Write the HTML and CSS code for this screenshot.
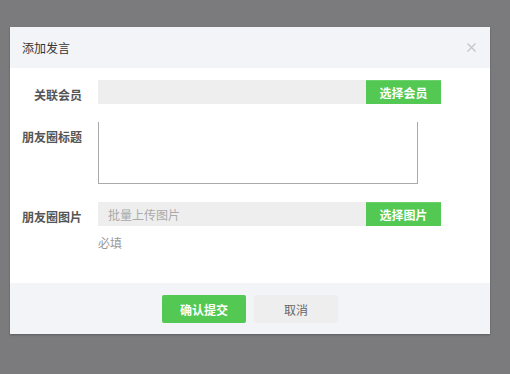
FILE: index.html
```html
<!DOCTYPE html>
<html lang="zh-CN">
<head>
    <meta charset="UTF-8">
    <title>添加发言</title>
    <link rel="stylesheet" href="styles.css">
</head>
<body>
    <div class="dialog">
        <div class="dialog-head">
            <span class="dialog-title">添加发言</span>
            <svg class="close" width="9" height="9" viewBox="0 0 9 9">
                <path d="M0.5 0.5 L8.5 8.5 M8.5 0.5 L0.5 8.5" stroke="#c4c4c8" stroke-width="1.2"/>
            </svg>
        </div>
        <div class="dialog-body">
            <div class="form-row">
                <label class="form-label">关联会员</label>
                <div class="field-group">
                    <input type="text" class="field">
                    <button class="pick-btn">选择会员</button>
                </div>
            </div>
            <div class="form-row">
                <label class="form-label">朋友圈标题</label>
                <textarea class="area"></textarea>
            </div>
            <div class="form-row">
                <label class="form-label">朋友圈图片</label>
                <div class="field-stack">
                    <div class="field-group">
                        <input type="text" class="field" placeholder="批量上传图片">
                        <button class="pick-btn">选择图片</button>
                    </div>
                    <div class="hint">必填</div>
                </div>
            </div>
        </div>
        <div class="dialog-foot">
            <button class="btn btn-ok">确认提交</button>
            <button class="btn btn-cancel">取消</button>
        </div>
    </div>
</body>
</html>
```

FILE: styles.css
```css
* {
    margin: 0;
    padding: 0;
    box-sizing: border-box;
    font-family: "Noto Sans CJK SC", "Microsoft YaHei", sans-serif;
}
body {
    background: #7b7b7d;
    width: 510px;
    height: 374px;
    overflow: hidden;
    padding-top: 27px;
}
.dialog {
    margin-left: 10px;
    width: 480px;
    background: #fff;
    box-shadow: 0 1px 2px rgba(0, 0, 0, 0.25);
}
.dialog-head {
    height: 41px;
    background: #f3f4f8;
    display: flex;
    align-items: center;
    justify-content: space-between;
    padding: 0 14px 0 12px;
}
.dialog-title {
    font-size: 12px;
    color: #333;
}
.close {
    display: block;
}
.dialog-body {
    height: 215px;
    padding-top: 12px;
    display: flex;
    flex-direction: column;
    gap: 18px;
}
.form-row {
    display: flex;
    align-items: flex-start;
    gap: 16px;
}
.form-label {
    width: 60px;
    height: 24px;
    margin-left: 12px;
    text-align: right;
    font-size: 12px;
    font-weight: 600;
    color: #555;
    line-height: 24px;
    padding-top: 3px;
}
.field-group {
    display: flex;
    height: 24px;
}
.field {
    width: 268px;
    height: 24px;
    border: none;
    outline: none;
    background: #eeeeee;
    padding: 0 10px;
    font-size: 12px;
    color: #555;
}
.field::placeholder {
    color: #aaa;
}
.pick-btn {
    width: 75px;
    height: 24px;
    border: none;
    border-top: 1px solid #6bd26b;
    background: #53c853;
    color: #fff;
    font-size: 12px;
    font-weight: 600;
}
.area {
    width: 320px;
    height: 62px;
    border: 1px solid #aaa;
    border-top: none;
    resize: none;
    outline: none;
    background: #fff;
}
.field-stack {
    display: flex;
    flex-direction: column;
}
.hint {
    margin-top: 8px;
    font-size: 12px;
    color: #999;
    line-height: 18px;
}
.dialog-foot {
    height: 51px;
    background: #f3f4f8;
    display: flex;
    justify-content: center;
    gap: 8px;
    padding-top: 12px;
}
.btn {
    width: 84px;
    height: 28px;
    border: none;
    border-radius: 2px;
    font-size: 12px;
}
.btn-ok {
    background: #53c853;
    color: #fff;
    font-weight: 600;
}
.btn-cancel {
    background: #eeeeee;
    color: #666;
}
```
